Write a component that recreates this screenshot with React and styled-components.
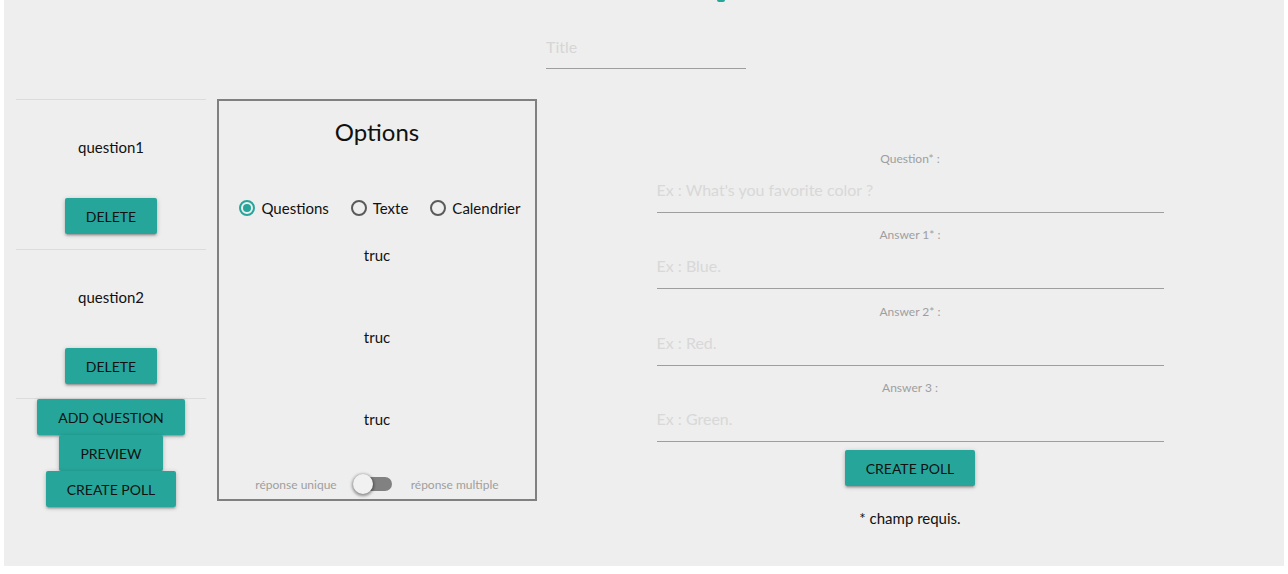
import React from "react";
import styled, { createGlobalStyle } from "styled-components";

const Global = createGlobalStyle`
  html, body { margin: 0; padding: 0; background: #ffffff; }
  body { font-family: Lato, "Open Sans", sans-serif; color: #111; }
  * { box-sizing: border-box; }
`;

const Page = styled.div`
  margin: 0 4px;
  height: 566px;
  background: #eeeeee;
  display: flex;
  flex-direction: column;
  overflow: hidden;
`;

const TopStrip = styled.div`
  height: 3px;
  display: flex;
  padding-left: 713px;
`;

const TopMark = styled.span`
  width: 8px;
  height: 2px;
  background: #26a69a;
  border-radius: 0 0 3px 3px;
`;

const TitleWrap = styled.div`
  display: flex;
  justify-content: center;
  padding: 21px 0 30px 4px;
`;

const TitleInput = styled.input`
  width: 200px;
  height: 45px;
  border: none;
  border-bottom: 1px solid #9e9e9e;
  background: transparent;
  font-family: inherit;
  font-size: 16px;
  padding: 0;
  outline: none;
  &::placeholder { color: #d6d6d6; }
`;

const Main = styled.div`
  display: flex;
  align-items: flex-start;
  padding: 0 12px;
  gap: 11px;
`;

const LeftCol = styled.div`
  width: 190px;
  display: flex;
  flex-direction: column;
  align-items: center;
  border-top: 1px solid #dcdcdc;
`;

const QuestionItem = styled.div`
  width: 100%;
  height: 150px;
  border-bottom: 1px solid #dcdcdc;
  display: flex;
  flex-direction: column;
  align-items: center;
  padding-top: 37px;
  &:last-of-type { height: 149px; }
`;

const QuestionName = styled.div`
  font-size: 15px;
  line-height: 20px;
  height: 20px;
  margin-bottom: 41px;
`;

const Button = styled.button`
  height: 36px;
  padding: 0 21px;
  border: none;
  border-radius: 2px;
  background: #26a69a;
  color: #111;
  font-family: inherit;
  font-size: 14px;
  text-transform: uppercase;
  cursor: pointer;
  box-shadow: 0 2px 2px 0 rgba(0,0,0,0.14), 0 3px 1px -2px rgba(0,0,0,0.12), 0 1px 5px 0 rgba(0,0,0,0.2);
`;

const OptionsBox = styled.div`
  width: 320px;
  height: 402px;
  border: 2px solid #808080;
  display: flex;
  flex-direction: column;
  align-items: center;
  padding-top: 15px;
`;

const OptionsTitle = styled.h2`
  margin: 0;
  font-size: 24px;
  line-height: 32px;
  font-weight: 400;
`;

const RadioRow = styled.div`
  display: flex;
  justify-content: center;
  gap: 22px;
  margin-top: 48px;
  height: 24px;
  align-items: center;
  padding-left: 6px;
`;

const RadioLabel = styled.label`
  display: flex;
  align-items: center;
  gap: 6px;
  font-size: 15px;
`;

const RadioCircle = styled.span`
  width: 16px;
  height: 16px;
  border-radius: 50%;
  border: 2px solid ${p => (p.$checked ? "#26a69a" : "#5a5a5a")};
  display: flex;
  align-items: center;
  justify-content: center;
  &::after {
    content: "";
    width: 8px;
    height: 8px;
    border-radius: 50%;
    background: ${p => (p.$checked ? "#26a69a" : "transparent")};
  }
`;

const TrucList = styled.div`
  display: flex;
  flex-direction: column;
  align-items: center;
  gap: 62px;
  margin-top: 25px;
`;

const Truc = styled.div`
  font-size: 15px;
  line-height: 20px;
`;

const ToggleRow = styled.div`
  margin-top: auto;
  margin-bottom: 5px;
  display: flex;
  align-items: center;
  gap: 19px;
  height: 20px;
  font-size: 12px;
  color: #9e9e9e;
`;

const Switch = styled.span`
  position: relative;
  width: 36px;
  height: 14px;
  border-radius: 15px;
  background: #818181;
  &::after {
    content: "";
    position: absolute;
    left: -3px;
    top: -3px;
    width: 20px;
    height: 20px;
    border-radius: 50%;
    background: #f1f1f1;
    box-shadow: 0 1px 3px 1px rgba(0,0,0,0.4);
  }
`;

const RightCol = styled.div`
  flex: 1;
  display: flex;
  justify-content: center;
  padding-top: 37px;
`;

const Form = styled.div`
  width: 507px;
  display: flex;
  flex-direction: column;
  align-items: center;
`;

const FieldLabel = styled.div`
  font-size: 12px;
  line-height: 16px;
  padding-top: 14.5px;
  color: #9e9e9e;
  text-align: center;
`;

const FieldInput = styled.input`
  width: 100%;
  height: 46px;
  border: none;
  border-bottom: 1px solid #9e9e9e;
  background: transparent;
  font-family: inherit;
  font-size: 16px;
  padding: 0;
  outline: none;
  &::placeholder { color: #d8d8d8; }
`;

const SubmitWrap = styled.div`
  margin-top: 8px;
`;

const Note = styled.div`
  margin-top: 23px;
  font-size: 15px;
  line-height: 18px;
`;

const questions = ["question1", "question2"];
const fields = [
  { label: "Question* :", ph: "Ex : What's you favorite color ?" },
  { label: "Answer 1* :", ph: "Ex : Blue." },
  { label: "Answer 2* :", ph: "Ex : Red." },
  { label: "Answer 3 :", ph: "Ex : Green." },
];

export default function App() {
  return (
    <>
      <Global />
      <Page>
        <TopStrip><TopMark /></TopStrip>
        <TitleWrap>
          <TitleInput placeholder="Title" />
        </TitleWrap>
        <Main>
          <LeftCol>
            {questions.map(q => (
              <QuestionItem key={q}>
                <QuestionName>{q}</QuestionName>
                <Button>Delete</Button>
              </QuestionItem>
            ))}
            <Button>Add question</Button>
            <Button>Preview</Button>
            <Button>Create poll</Button>
          </LeftCol>
          <OptionsBox>
            <OptionsTitle>Options</OptionsTitle>
            <RadioRow>
              <RadioLabel><RadioCircle $checked />Questions</RadioLabel>
              <RadioLabel><RadioCircle />Texte</RadioLabel>
              <RadioLabel><RadioCircle />Calendrier</RadioLabel>
            </RadioRow>
            <TrucList>
              <Truc>truc</Truc>
              <Truc>truc</Truc>
              <Truc>truc</Truc>
            </TrucList>
            <ToggleRow>
              <span>réponse unique</span>
              <Switch />
              <span>réponse multiple</span>
            </ToggleRow>
          </OptionsBox>
          <RightCol>
            <Form>
              {fields.map(f => (
                <React.Fragment key={f.label}>
                  <FieldLabel>{f.label}</FieldLabel>
                  <FieldInput placeholder={f.ph} />
                </React.Fragment>
              ))}
              <SubmitWrap><Button>Create poll</Button></SubmitWrap>
              <Note>* champ requis.</Note>
            </Form>
          </RightCol>
        </Main>
      </Page>
    </>
  );
}
